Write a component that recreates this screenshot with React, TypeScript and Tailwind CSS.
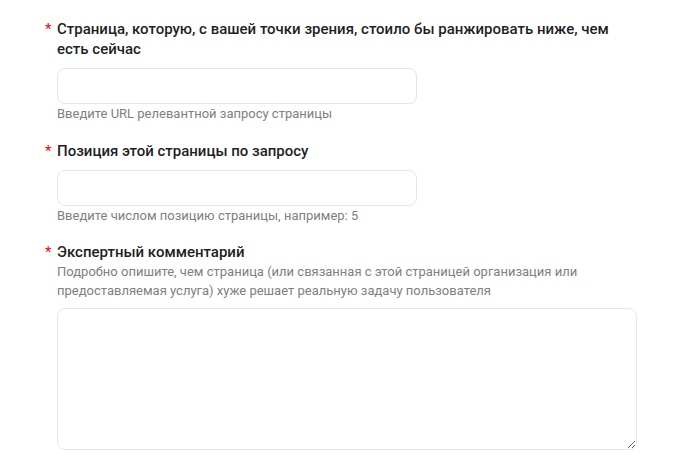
import React from 'react';

const font = { fontFamily: 'Roboto, "Noto Sans", sans-serif' };

const Label: React.FC<{ children: React.ReactNode }> = ({ children }) => (
  <div className="flex">
    <span className="w-[12px] shrink-0 text-[15px] leading-[20px] text-[#ff0000]">*</span>
    <span className="text-[15px] leading-[20px] font-medium text-[#1f1f1f] max-w-[560px]">
      {children}
    </span>
  </div>
);

const Hint: React.FC<{ children: React.ReactNode }> = ({ children }) => (
  <p className="pl-[12px] text-[13px] leading-[19px] text-[#808080]">{children}</p>
);

export default function App() {
  return (
    <div className="w-[696px] h-[470px] bg-white overflow-hidden pl-[45px] pt-[19px]" style={font}>
      {/* URL */}
      <div className="mb-[18px]">
        <Label>
          Страница, которую, с вашей точки зрения, стоило бы ранжировать ниже, чем есть сейчас
        </Label>
        <div className="pl-[12px] mt-[9px]">
          <input className="block w-[360px] h-[36px] rounded-[8px] border border-[#e5e5e5] outline-none px-3" />
        </div>
        <Hint>Введите URL релевантной запросу страницы</Hint>
      </div>

      {/* Position */}
      <div className="mb-[17px]">
        <Label>Позиция этой страницы по запросу</Label>
        <div className="pl-[12px] mt-[9px]">
          <input className="block w-[360px] h-[36px] rounded-[8px] border border-[#e5e5e5] outline-none px-3" />
        </div>
        <Hint>Введите числом позицию страницы, например: 5</Hint>
      </div>

      {/* Comment */}
      <div>
        <Label>Экспертный комментарий</Label>
        <Hint>
          Подробно опишите, чем страница (или связанная с этой страницей организация или
          <br />
          предоставляемая услуга) хуже решает реальную задачу пользователя
        </Hint>
        <div className="pl-[12px] mt-[8px]">
          <textarea className="block w-[580px] h-[142px] rounded-[8px] border border-[#e5e5e5] outline-none p-3 resize" />
        </div>
      </div>
    </div>
  );
}
